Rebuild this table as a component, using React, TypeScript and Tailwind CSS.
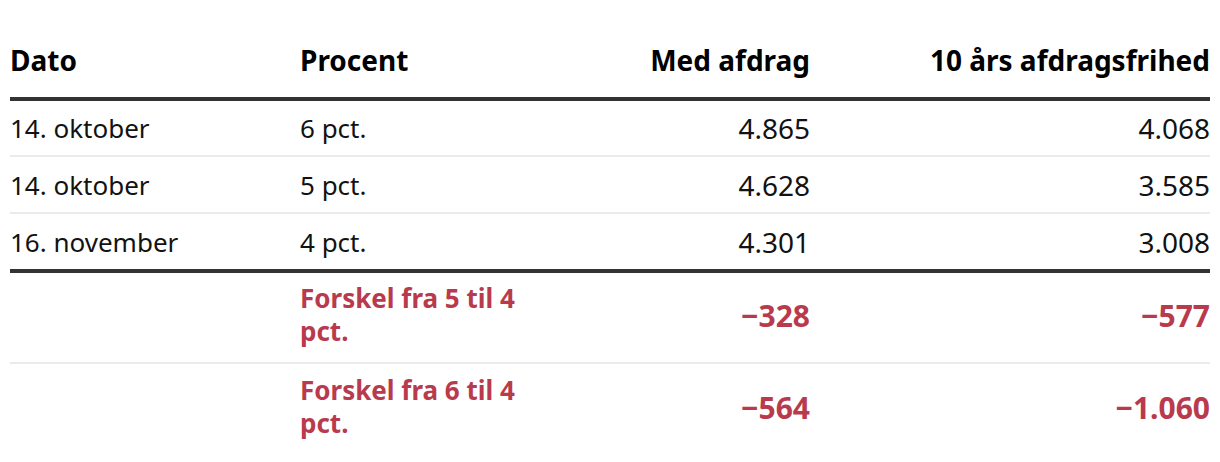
const rows = [
  { dato: "14. oktober", procent: "6 pct.", med: "4.865", fri: "4.068" },
  { dato: "14. oktober", procent: "5 pct.", med: "4.628", fri: "3.585" },
  { dato: "16. november", procent: "4 pct.", med: "4.301", fri: "3.008" },
]

const diffs = [
  { label: "Forskel fra 5 til 4 pct.", med: "−328", fri: "−577" },
  { label: "Forskel fra 6 til 4 pct.", med: "−564", fri: "−1.060" },
]

export default function App() {
  return (
    <div className="w-[1220px] h-[462px] bg-white px-[10px] font-['Noto_Sans','Open_Sans',sans-serif] text-[#121212]">
      <table className="w-full table-fixed border-collapse">
        <colgroup>
          <col className="w-[290px]" />
          <col className="w-[240px]" />
          <col className="w-[270px]" />
          <col />
        </colgroup>
        <thead>
          <tr className="h-[99px] border-b-4 border-[#333]">
            <th className="pb-[21px] align-bottom text-left text-[28px] leading-[32px] font-bold text-black">Dato</th>
            <th className="pb-[21px] align-bottom text-left text-[28px] leading-[32px] font-bold text-black">Procent</th>
            <th className="pb-[21px] align-bottom text-right text-[28px] leading-[32px] font-bold text-black">Med afdrag</th>
            <th className="pb-[21px] align-bottom text-right text-[28px] leading-[32px] font-bold text-black">10 års afdragsfrihed</th>
          </tr>
        </thead>
        <tbody>
          {rows.map((r, i) => (
            <tr
              key={i}
              className={i === rows.length - 1 ? "h-[58px] border-b-4 border-[#333]" : "h-[57px] border-b-2 border-[#ebebeb]"}
            >
              <td className="text-left text-[26px] leading-[32px]">{r.dato}</td>
              <td className="text-left text-[26px] leading-[32px]">{r.procent}</td>
              <td className="text-right text-[28px] leading-[32px]">{r.med}</td>
              <td className="text-right text-[28px] leading-[32px]">{r.fri}</td>
            </tr>
          ))}
          {diffs.map((d, i) => (
            <tr
              key={d.label}
              className={i === 0 ? "h-[92px] border-b-2 border-[#ebebeb] text-[#b93a4c]" : "h-[92px] text-[#b93a4c]"}
            >
              <td />
              <td className="pr-[10px] pb-[5px] text-left text-[26px] leading-[33px] font-bold">{d.label}</td>
              <td className="pb-[3px] text-right text-[30px] leading-[32px] font-bold">{d.med}</td>
              <td className="pb-[3px] text-right text-[30px] leading-[32px] font-bold">{d.fri}</td>
            </tr>
          ))}
        </tbody>
      </table>
    </div>
  )
}
